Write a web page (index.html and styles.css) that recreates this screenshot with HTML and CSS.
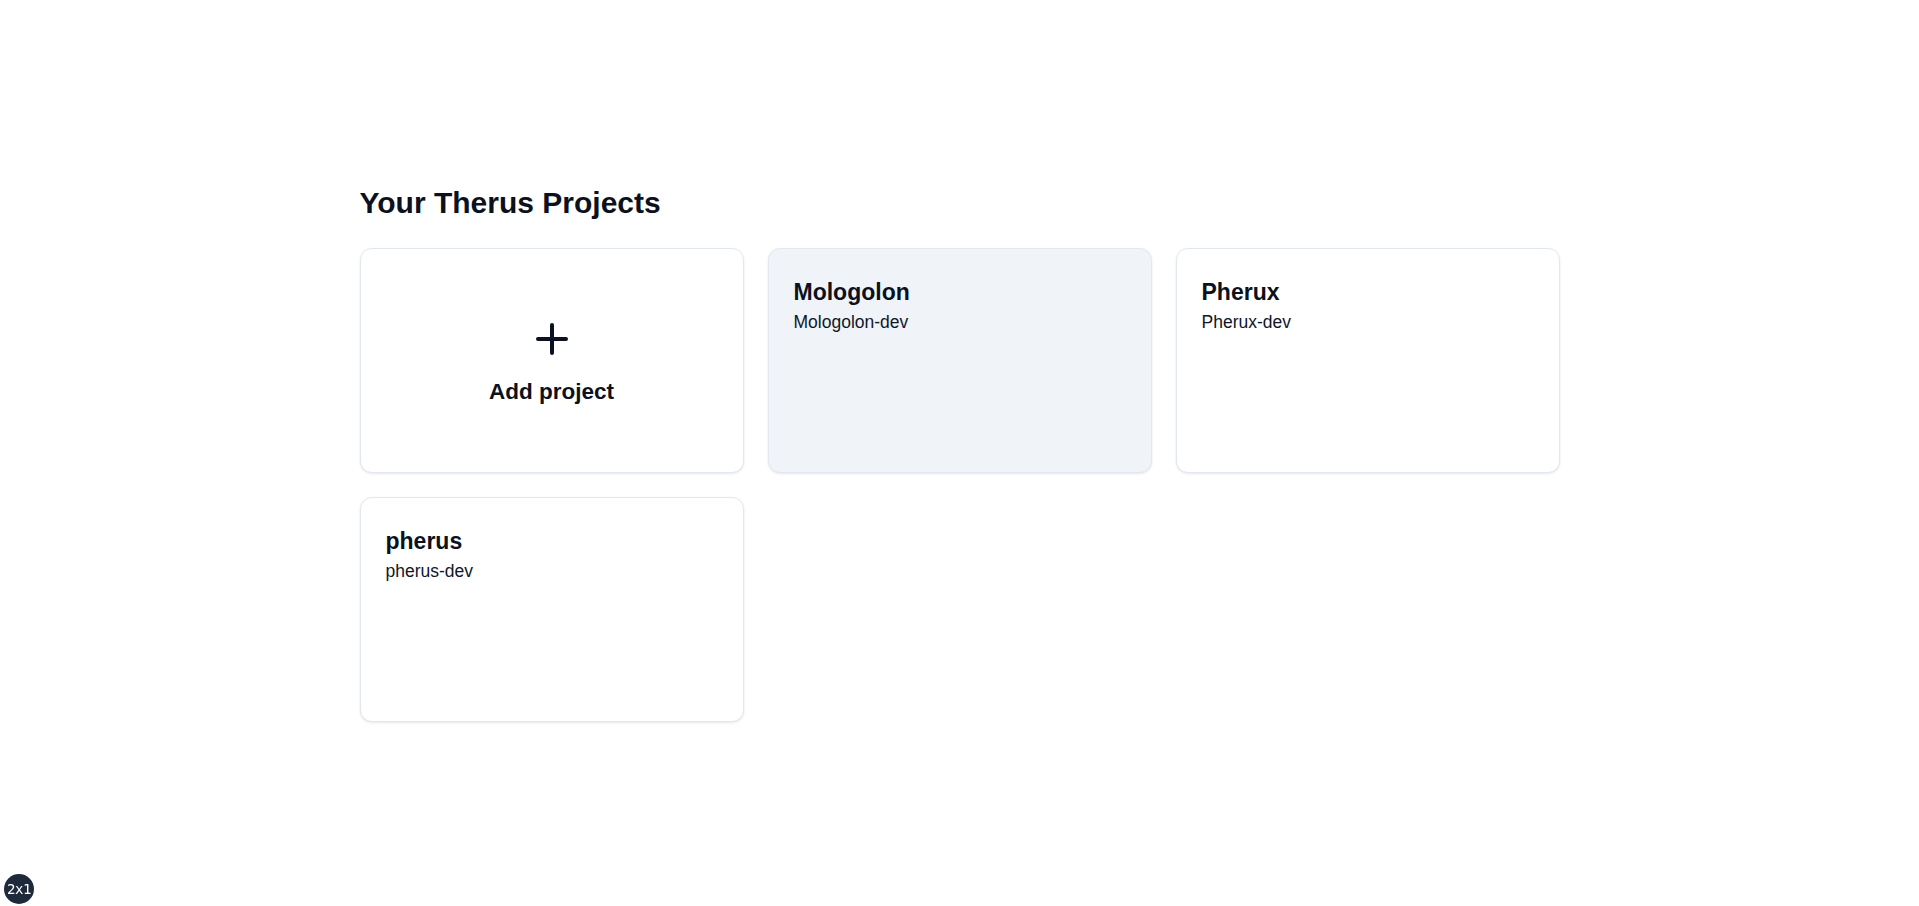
FILE: index.html
```html
<!DOCTYPE html>
<html lang="en">
<head>
    <meta charset="UTF-8">
    <meta name="viewport" content="width=device-width, initial-scale=1.0">
    <title>Your Therus Projects</title>
    <link rel="stylesheet" href="styles.css">
</head>
<body>

    <main class="page">
        <div class="container">
            <h1 class="page-title">Your Therus Projects</h1>

            <div class="project-grid">
                <a class="card card-add" href="#">
                    <svg class="plus-icon" width="48" height="48" viewBox="0 0 24 24" fill="none" stroke="currentColor" stroke-width="2" stroke-linecap="round" stroke-linejoin="round">
                        <path d="M5 12h14"/>
                        <path d="M12 5v14"/>
                    </svg>
                    <span class="add-label">Add project</span>
                </a>

                <a class="card card-active" href="#">
                    <span class="project-name">Mologolon</span>
                    <span class="project-id">Mologolon-dev</span>
                </a>

                <a class="card" href="#">
                    <span class="project-name">Pherux</span>
                    <span class="project-id">Pherux-dev</span>
                </a>

                <a class="card" href="#">
                    <span class="project-name">pherus</span>
                    <span class="project-id">pherus-dev</span>
                </a>
            </div>
        </div>
    </main>

    <div class="ratio-badge">2x1</div>

</body>
</html>
```

FILE: styles.css
```css
body {
    font-family: 'Liberation Sans', Arial, Helvetica, sans-serif;
    color: #0b1120;
    margin: 0;
    background-color: #fff;
}

.page {
    min-height: 100vh;
    display: flex;
    align-items: center;
    justify-content: center;
}

.container {
    width: 100%;
    max-width: 1200px;
}

.page-title {
    font-size: 30px;
    line-height: 36px;
    font-weight: 700;
    margin: 0 0 27px;
}

.project-grid {
    display: grid;
    grid-template-columns: repeat(3, 1fr);
    grid-auto-rows: 225px;
    gap: 24px;
}

.card {
    display: flex;
    flex-direction: column;
    padding: 26px 25px 24px;
    border: 1px solid #e2e8f0;
    border-radius: 12px;
    background-color: #fff;
    box-shadow: 0 1px 3px rgba(15, 23, 42, 0.08), 0 1px 2px -1px rgba(15, 23, 42, 0.08);
    color: inherit;
    text-decoration: none;
}

.card-active {
    background-color: #f0f3f8;
}

.card-add {
    align-items: center;
    justify-content: center;
    gap: 13px;
    padding-top: 28px;
}

.plus-icon {
    display: block;
    color: #0b1120;
}

.add-label {
    font-size: 22.5px;
    line-height: 1.45;
    font-weight: 700;
}

.project-name {
    font-size: 23px;
    line-height: 1.5;
    font-weight: 700;
}

.project-id {
    font-size: 17.5px;
    line-height: 1.5;
    color: #0f172a;
}

.ratio-badge {
    position: fixed;
    left: 4px;
    bottom: 2px;
    width: 30px;
    height: 30px;
    border-radius: 50%;
    background-color: #1e293b;
    color: #fff;
    font-family: 'DejaVu Sans Mono', 'Liberation Mono', monospace;
    font-size: 14px;
    line-height: 30px;
    text-align: center;
    letter-spacing: -0.5px;
}
```
